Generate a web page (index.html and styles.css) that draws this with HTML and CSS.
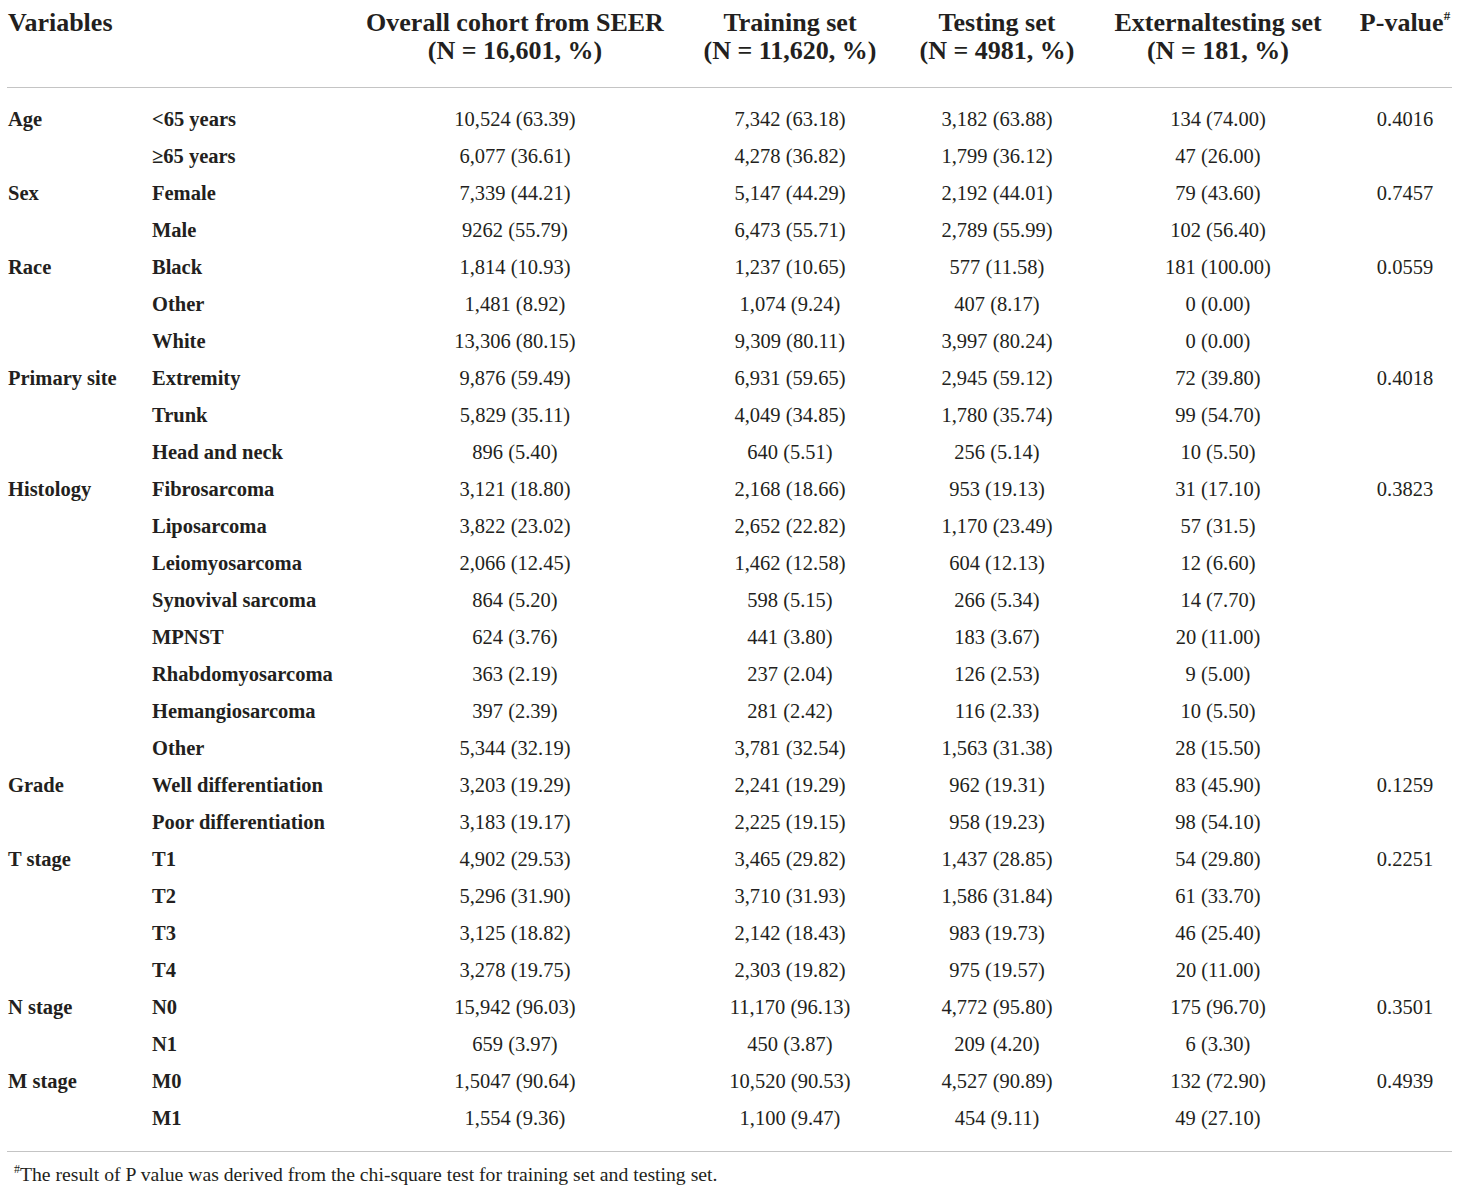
FILE: index.html
```html
<!DOCTYPE html>
<html lang="en">
<head>
<meta charset="utf-8">
<title>Baseline characteristics</title>
<link rel="stylesheet" href="styles.css">
</head>
<body>
<div class="page">
<table class="tbl">
<colgroup>
<col class="c1"><col class="c2"><col class="c3"><col class="c4"><col class="c5"><col class="c6"><col class="c7">
</colgroup>
<thead>
<tr>
<th class="var" colspan="2">Variables</th>
<th>Overall cohort from SEER<br>(N = 16,601, %)</th>
<th>Training set<br>(N = 11,620, %)</th>
<th>Testing set<br>(N = 4981, %)</th>
<th>Externaltesting set<br>(N = 181, %)</th>
<th class="pv">P-value<sup>#</sup></th>
</tr>
</thead>
<tbody>
<tr class="first"><td class="g">Age</td><td class="s">&lt;65 years</td><td>10,524 (63.39)</td><td>7,342 (63.18)</td><td>3,182 (63.88)</td><td>134 (74.00)</td><td class="pv">0.4016</td></tr>
<tr><td class="g"></td><td class="s">≥65 years</td><td>6,077 (36.61)</td><td>4,278 (36.82)</td><td>1,799 (36.12)</td><td>47 (26.00)</td><td class="pv"></td></tr>
<tr><td class="g">Sex</td><td class="s">Female</td><td>7,339 (44.21)</td><td>5,147 (44.29)</td><td>2,192 (44.01)</td><td>79 (43.60)</td><td class="pv">0.7457</td></tr>
<tr><td class="g"></td><td class="s">Male</td><td>9262 (55.79)</td><td>6,473 (55.71)</td><td>2,789 (55.99)</td><td>102 (56.40)</td><td class="pv"></td></tr>
<tr><td class="g">Race</td><td class="s">Black</td><td>1,814 (10.93)</td><td>1,237 (10.65)</td><td>577 (11.58)</td><td>181 (100.00)</td><td class="pv">0.0559</td></tr>
<tr><td class="g"></td><td class="s">Other</td><td>1,481 (8.92)</td><td>1,074 (9.24)</td><td>407 (8.17)</td><td>0 (0.00)</td><td class="pv"></td></tr>
<tr><td class="g"></td><td class="s">White</td><td>13,306 (80.15)</td><td>9,309 (80.11)</td><td>3,997 (80.24)</td><td>0 (0.00)</td><td class="pv"></td></tr>
<tr><td class="g">Primary site</td><td class="s">Extremity</td><td>9,876 (59.49)</td><td>6,931 (59.65)</td><td>2,945 (59.12)</td><td>72 (39.80)</td><td class="pv">0.4018</td></tr>
<tr><td class="g"></td><td class="s">Trunk</td><td>5,829 (35.11)</td><td>4,049 (34.85)</td><td>1,780 (35.74)</td><td>99 (54.70)</td><td class="pv"></td></tr>
<tr><td class="g"></td><td class="s">Head and neck</td><td>896 (5.40)</td><td>640 (5.51)</td><td>256 (5.14)</td><td>10 (5.50)</td><td class="pv"></td></tr>
<tr><td class="g">Histology</td><td class="s">Fibrosarcoma</td><td>3,121 (18.80)</td><td>2,168 (18.66)</td><td>953 (19.13)</td><td>31 (17.10)</td><td class="pv">0.3823</td></tr>
<tr><td class="g"></td><td class="s">Liposarcoma</td><td>3,822 (23.02)</td><td>2,652 (22.82)</td><td>1,170 (23.49)</td><td>57 (31.5)</td><td class="pv"></td></tr>
<tr><td class="g"></td><td class="s">Leiomyosarcoma</td><td>2,066 (12.45)</td><td>1,462 (12.58)</td><td>604 (12.13)</td><td>12 (6.60)</td><td class="pv"></td></tr>
<tr><td class="g"></td><td class="s">Synovival sarcoma</td><td>864 (5.20)</td><td>598 (5.15)</td><td>266 (5.34)</td><td>14 (7.70)</td><td class="pv"></td></tr>
<tr><td class="g"></td><td class="s">MPNST</td><td>624 (3.76)</td><td>441 (3.80)</td><td>183 (3.67)</td><td>20 (11.00)</td><td class="pv"></td></tr>
<tr><td class="g"></td><td class="s">Rhabdomyosarcoma</td><td>363 (2.19)</td><td>237 (2.04)</td><td>126 (2.53)</td><td>9 (5.00)</td><td class="pv"></td></tr>
<tr><td class="g"></td><td class="s">Hemangiosarcoma</td><td>397 (2.39)</td><td>281 (2.42)</td><td>116 (2.33)</td><td>10 (5.50)</td><td class="pv"></td></tr>
<tr><td class="g"></td><td class="s">Other</td><td>5,344 (32.19)</td><td>3,781 (32.54)</td><td>1,563 (31.38)</td><td>28 (15.50)</td><td class="pv"></td></tr>
<tr><td class="g">Grade</td><td class="s">Well differentiation</td><td>3,203 (19.29)</td><td>2,241 (19.29)</td><td>962 (19.31)</td><td>83 (45.90)</td><td class="pv">0.1259</td></tr>
<tr><td class="g"></td><td class="s">Poor differentiation</td><td>3,183 (19.17)</td><td>2,225 (19.15)</td><td>958 (19.23)</td><td>98 (54.10)</td><td class="pv"></td></tr>
<tr><td class="g">T stage</td><td class="s">T1</td><td>4,902 (29.53)</td><td>3,465 (29.82)</td><td>1,437 (28.85)</td><td>54 (29.80)</td><td class="pv">0.2251</td></tr>
<tr><td class="g"></td><td class="s">T2</td><td>5,296 (31.90)</td><td>3,710 (31.93)</td><td>1,586 (31.84)</td><td>61 (33.70)</td><td class="pv"></td></tr>
<tr><td class="g"></td><td class="s">T3</td><td>3,125 (18.82)</td><td>2,142 (18.43)</td><td>983 (19.73)</td><td>46 (25.40)</td><td class="pv"></td></tr>
<tr><td class="g"></td><td class="s">T4</td><td>3,278 (19.75)</td><td>2,303 (19.82)</td><td>975 (19.57)</td><td>20 (11.00)</td><td class="pv"></td></tr>
<tr><td class="g">N stage</td><td class="s">N0</td><td>15,942 (96.03)</td><td>11,170 (96.13)</td><td>4,772 (95.80)</td><td>175 (96.70)</td><td class="pv">0.3501</td></tr>
<tr><td class="g"></td><td class="s">N1</td><td>659 (3.97)</td><td>450 (3.87)</td><td>209 (4.20)</td><td>6 (3.30)</td><td class="pv"></td></tr>
<tr><td class="g">M stage</td><td class="s">M0</td><td>1,5047 (90.64)</td><td>10,520 (90.53)</td><td>4,527 (90.89)</td><td>132 (72.90)</td><td class="pv">0.4939</td></tr>
<tr class="last"><td class="g"></td><td class="s">M1</td><td>1,554 (9.36)</td><td>1,100 (9.47)</td><td>454 (9.11)</td><td>49 (27.10)</td><td class="pv"></td></tr>
</tbody>
</table>
<p class="note"><sup>#</sup>The result of P value was derived from the chi-square test for training set and testing set.</p>
</div>
</body>
</html>
```
FILE: styles.css
```css
html, body {
  margin: 0;
  padding: 0;
  background: #ffffff;
}
body {
  font-family: "Liberation Serif", "Times New Roman", serif;
  color: #231f20;
}
.page {
  padding-left: 7px;
  width: 1445px;
}
.tbl {
  width: 1445px;
  table-layout: fixed;
  border-collapse: collapse;
  border-bottom: 1px solid #c4c4c4;
}
.c1 { width: 145px; }
.c2 { width: 193px; }
.c3 { width: 340px; }
.c4 { width: 210px; }
.c5 { width: 204px; }
.c6 { width: 238px; }
.c7 { width: 115px; }
.tbl th {
  font-size: 26px;
  line-height: 28px;
  font-weight: bold;
  text-align: center;
  vertical-align: top;
  padding: 9px 0 22px 0;
  white-space: nowrap;
  border-bottom: 1px solid #c4c4c4;
}
.tbl th.var {
  text-align: left;
  padding-left: 1px;
}
.tbl th.pv {
  padding-left: 21px;
}
.tbl sup {
  font-size: 13px;
  line-height: 0;
  vertical-align: 11px;
}
.tbl td {
  font-size: 20.5px;
  line-height: 37px;
  height: 37px;
  padding: 0;
  text-align: center;
  white-space: nowrap;
}
.tbl td.g {
  text-align: left;
  font-weight: bold;
  padding-left: 1px;
}
.tbl td.s {
  text-align: left;
  font-weight: bold;
}
.tbl td.pv {
  padding-left: 21px;
}
.tbl tr.first td {
  padding-top: 13px;
}
.tbl tr.last td {
  padding-bottom: 14px;
}
.note {
  margin: 0;
  padding: 8px 0 0 7px;
  font-size: 19.7px;
  line-height: 28px;
}
.note sup {
  font-size: 12px;
  line-height: 0;
  vertical-align: 8px;
}
```
